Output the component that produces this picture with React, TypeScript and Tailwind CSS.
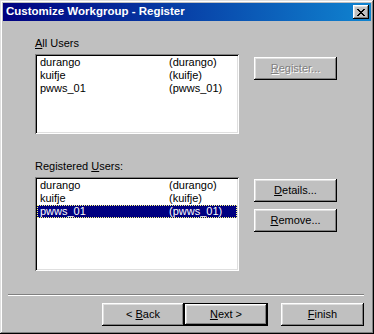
import React from "react";

const users = [
  { name: "durango", full: "(durango)" },
  { name: "kuifje", full: "(kuifje)" },
  { name: "pwws_01", full: "(pwws_01)" },
];

function Button({
  children,
  disabled,
  isDefault,
  className = "",
}: {
  children: React.ReactNode;
  disabled?: boolean;
  isDefault?: boolean;
  className?: string;
}) {
  const bevel =
    "shadow-[inset_-1px_-1px_#000,inset_1px_1px_#fff,inset_-2px_-2px_#808080,inset_2px_2px_#dfdfdf]";
  if (isDefault) {
    return (
      <div className={`border border-black h-[23px] ${className}`}>
        <div
          className={`h-full flex items-center justify-center bg-[#c0c0c0] text-black ${bevel}`}
        >
          {children}
        </div>
      </div>
    );
  }
  return (
    <div
      className={`h-[23px] flex items-center justify-center bg-[#c0c0c0] ${bevel} ${
        disabled ? "text-[#808080] [text-shadow:1px_1px_0_#fff]" : "text-black"
      } ${className}`}
    >
      {children}
    </div>
  );
}

function ListBox({ height, selected }: { height: string; selected?: number }) {
  return (
    <div
      className={`w-[204px] ${height} bg-white p-[2px] shadow-[inset_1px_1px_#808080,inset_-1px_-1px_#fff,inset_2px_2px_#000,inset_-2px_-2px_#dfdfdf]`}
    >
      {users.map((u, i) => (
        <div
          key={u.name}
          className={`flex h-[13px] leading-[11px] ${
            i === selected
              ? "bg-[#000080] text-white border border-dotted border-[#ffff80] pl-[2px]"
              : "text-black pl-[3px] pt-px"
          }`}
        >
          <span className="w-[129px]">{u.name}</span>
          <span>{u.full}</span>
        </div>
      ))}
    </div>
  );
}

export default function App() {
  return (
    <div
      className="w-[374px] h-[334px] bg-[#c0c0c0] p-[3px] flex flex-col text-[11px] shadow-[inset_-1px_-1px_#000,inset_1px_1px_#dfdfdf,inset_-2px_-2px_#808080,inset_2px_2px_#fff]"
      style={{ fontFamily: '"Liberation Sans", Arial, sans-serif' }}
    >
      <div className="h-[18px] flex items-center justify-between pl-[3px] pr-[2px] bg-[linear-gradient(90deg,#000080,#1084d0)]">
        <span className="text-white font-bold text-[11.5px] leading-none">
          Customize Workgroup - Register
        </span>
        <div className="w-[16px] h-[14px] flex items-center justify-center bg-[#c0c0c0] shadow-[inset_-1px_-1px_#000,inset_1px_1px_#fff,inset_-2px_-2px_#808080,inset_2px_2px_#dfdfdf]">
          <svg width="8" height="7" viewBox="0 0 8 7" shapeRendering="crispEdges">
            <path
              d="M0 0h2v1h-2zM6 0h2v1h-2zM1 1h2v1h-2zM5 1h2v1h-2zM2 2h4v1h-4zM3 3h2v1h-2zM2 4h4v1h-4zM1 5h2v1h-2zM5 5h2v1h-2zM0 6h2v1h-2zM6 6h2v1h-2z"
              fill="#000"
            />
          </svg>
        </div>
      </div>

      <div className="flex-1 flex flex-col px-[5px]">
        <div className="flex gap-[15px] pl-[27px] pt-[16px]">
          <div className="flex flex-col gap-[4px]">
            <div className="h-[13px] leading-[13px] text-black">
              <u>A</u>ll Users
            </div>
            <ListBox height="h-[80px]" />
          </div>
          <div className="pt-[20px]">
            <Button disabled className="w-[83px]">
              <span>
                <u>R</u>egister...
              </span>
            </Button>
          </div>
        </div>

        <div className="flex gap-[15px] pl-[27px] pt-[26px]">
          <div className="flex flex-col gap-[4px]">
            <div className="h-[13px] leading-[13px] text-black">
              Registered <u>U</u>sers:
            </div>
            <ListBox height="h-[94px]" selected={2} />
          </div>
          <div className="pt-[19px] flex flex-col gap-[7px]">
            <Button className="w-[83px]">
              <span>
                <u>D</u>etails...
              </span>
            </Button>
            <Button className="w-[83px]">
              <span>
                <u>R</u>emove...
              </span>
            </Button>
          </div>
        </div>

        <div className="mt-[23px] h-[2px] border-t border-[#808080] border-b border-b-white w-[356px]" />

        <div className="flex justify-end pt-[7px] pr-[2px]">
          <Button className="w-[82px]">
            <span>
              &lt; <u>B</u>ack
            </span>
          </Button>
          <Button isDefault className="w-[84px]">
            <span>
              <u>N</u>ext &gt;
            </span>
          </Button>
          <Button className="w-[83px] ml-[13px]">
            <span>
              <u>F</u>inish
            </span>
          </Button>
        </div>
      </div>
    </div>
  );
}
